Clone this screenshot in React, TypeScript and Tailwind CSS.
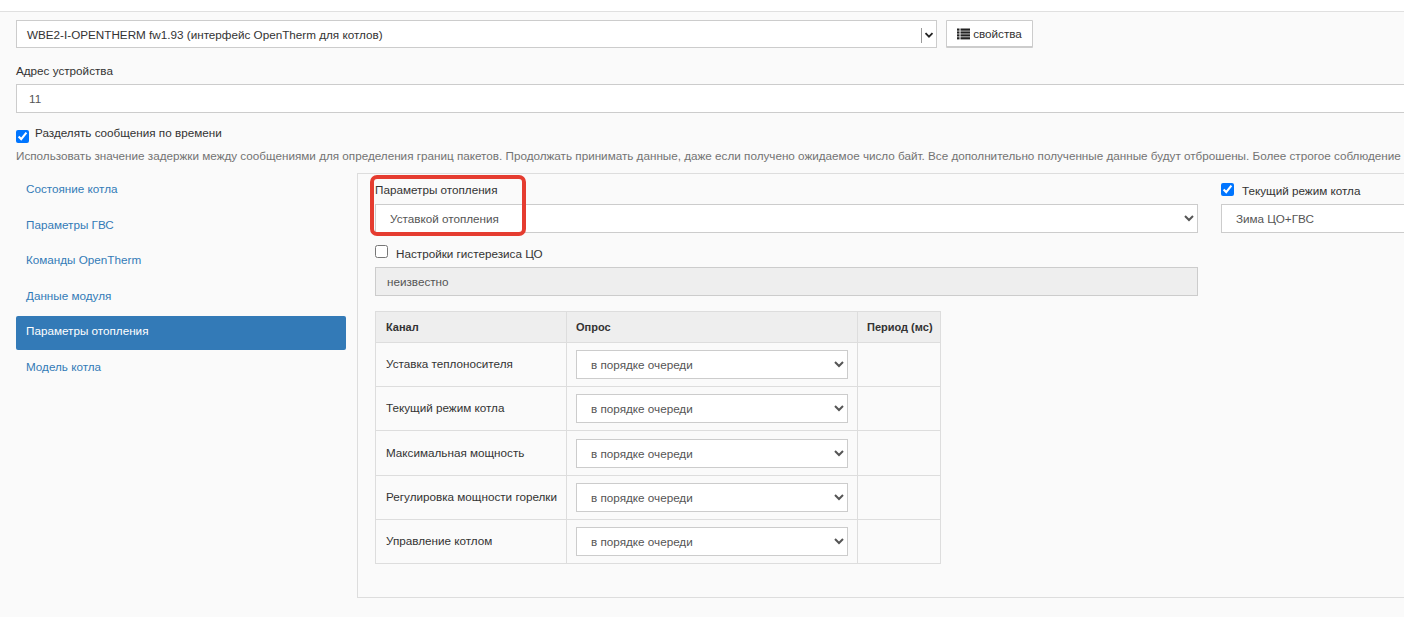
const tabs = ['Состояние котла', 'Параметры ГВС', 'Команды OpenTherm', 'Данные модуля', 'Параметры отопления', 'Модель котла']

const channels = [
  { name: 'Уставка теплоносителя', row: 'h-[44px]' },
  { name: 'Текущий режим котла', row: 'h-[44px]' },
  { name: 'Максимальная мощность', row: 'h-[45px]' },
  { name: 'Регулировка мощности горелки', row: 'h-[44px]' },
  { name: 'Управление котлом', row: 'h-[44px]' }
]

const helpText =
  'Использовать значение задержки между сообщениями для определения границ пакетов. Продолжать принимать данные, даже если получено ожидаемое число байт. Все дополнительно полученные данные будут отброшены. Более строгое соблюдение'

function ListIcon() {
  return (
    <svg width="13" height="12" viewBox="0 0 13 12" fill="#222">
      <rect x="0" y="0.5" width="2.5" height="2.2" />
      <rect x="3.5" y="0.5" width="9.5" height="2.2" />
      <rect x="0" y="3.4" width="2.5" height="2.2" />
      <rect x="3.5" y="3.4" width="9.5" height="2.2" />
      <rect x="0" y="6.3" width="2.5" height="2.2" />
      <rect x="3.5" y="6.3" width="9.5" height="2.2" />
      <rect x="0" y="9.2" width="2.5" height="2.2" />
      <rect x="3.5" y="9.2" width="9.5" height="2.2" />
    </svg>
  )
}

export default function App() {
  return (
    <div className="w-[1404px] h-[617px] overflow-hidden bg-[#fafafa] text-[11.7px] leading-[17px] text-[#333] font-['Liberation_Sans',Arial,sans-serif]">
      <div className="h-[12px] bg-white border-b border-[#e0e0e0]" />

      <div className="w-[1500px] pl-4 pt-2">
        <div className="flex gap-[9px] h-[28px]">
          <div className="relative w-[921px] h-[28px] bg-white border border-[#ccc] flex items-center pl-[10px] pt-[1px] text-[#333]">
            WBE2-I-OPENTHERM fw1.93 (интерфейс OpenTherm для котлов)
            <div className="absolute right-[14px] top-[7px] h-[15px] w-px bg-[#999]" />
            <svg className="absolute right-[2px] top-[9px]" width="10" height="10" viewBox="0 0 10 10" fill="none">
              <path d="M1.5 3.2 5 6.7l3.5-3.5" stroke="#222" strokeWidth="1.8" />
            </svg>
          </div>
          <button className="w-[87px] h-[28px] bg-white border border-[#ccc] border-b-2 rounded-[1px] flex items-center justify-center gap-[3px] text-[#333]">
            <ListIcon />
            <span>свойства</span>
          </button>
        </div>

        <div className="mt-[14px] h-[17px]">Адрес устройства</div>
        <div className="mt-[5px] h-[29px] bg-white border border-[#ccc] flex items-center pl-[12px] pb-[1px] text-[#555]">11</div>

        <label className="mt-[13px] flex items-center h-[17px]">
          <input type="checkbox" defaultChecked className="w-[13px] h-[13px] mt-[3px]" />
          <span className="ml-[6px] -mt-[1px] -translate-y-0.5">Разделять сообщения по времени</span>
        </label>
        <div className="mt-[4px] h-[17px] whitespace-nowrap text-[#737373]">{helpText}</div>

        <div className="flex mt-[9px]">
          <ul className="w-[330px] mr-[11px] pt-[1px]">
            {tabs.map((tab) => (
              <li key={tab}>
                <a
                  className={
                    tab === 'Параметры отопления'
                      ? 'block h-[34px] mb-[1.5px] px-[10px] pt-[6px] rounded-[2px] bg-[#337ab7] text-white'
                      : 'block h-[34px] mb-[1.5px] px-[10px] pt-[6px] text-[#337ab7]'
                  }
                >
                  {tab}
                </a>
              </li>
            ))}
          </ul>

          <div className="relative w-[1143px] h-[425px] border border-[#ddd] pl-[17px] pt-[7px] flex">
            <div className="w-[823px] mr-[23px]">
              <div className="h-[17px]">Параметры отопления</div>
              <select className="block mt-[6px] w-full h-[29px] bg-white border border-[#ccc] pl-[10px] text-[#555]">
                <option>Уставкой отопления</option>
              </select>
              <label className="mt-[11px] flex items-center h-[17px]">
                <input type="checkbox" className="w-[13px] h-[13px] -mt-[2px]" />
                <span className="ml-[8px] mt-[1px]">Настройки гистерезиса ЦО</span>
              </label>
              <div className="mt-[6px] h-[29px] bg-[#eee] border border-[#ccc] flex items-center pl-[11px] text-[#555]">неизвестно</div>

              <table className="mt-[15px] w-[565px] table-fixed border-collapse">
                <colgroup>
                  <col className="w-[191px]" />
                  <col className="w-[291px]" />
                  <col className="w-[83px]" />
                </colgroup>
                <thead>
                  <tr className="h-[31px] bg-[#eee] text-left text-[11px]">
                    <th className="border border-[#ddd] pl-[10px] font-bold">Канал</th>
                    <th className="border border-[#ddd] pl-[9px] font-bold">Опрос</th>
                    <th className="border border-[#ddd] pl-[9px] font-bold whitespace-nowrap">Период (мс)</th>
                  </tr>
                </thead>
                <tbody>
                  {channels.map((channel) => (
                    <tr key={channel.name} className={channel.row}>
                      <td className="border border-[#ddd] pl-[10px] pb-[2px] whitespace-nowrap">{channel.name}</td>
                      <td className="border border-[#ddd] pl-[9px]">
                        <select className="block w-[272px] h-[29px] bg-white border border-[#ccc] pl-[10px] text-[#555]">
                          <option>в порядке очереди</option>
                        </select>
                      </td>
                      <td className="border border-[#ddd]" />
                    </tr>
                  ))}
                </tbody>
              </table>
            </div>

            <div className="w-[260px] mt-[1px]">
              <label className="flex items-center h-[17px]">
                <input type="checkbox" defaultChecked className="w-[13px] h-[13px] -mt-[2px]" />
                <span className="ml-[8px]">Текущий режим котла</span>
              </label>
              <select className="block mt-[5px] w-full h-[29px] bg-white border border-[#ccc] pl-[10px] text-[#555]">
                <option>Зима ЦО+ГВС</option>
              </select>
            </div>

            <div className="absolute left-[12px] top-[1px] w-[156px] h-[61px] border-[4px] border-[#e53c30] rounded-[7px]" />
          </div>
        </div>
      </div>
    </div>
  )
}
